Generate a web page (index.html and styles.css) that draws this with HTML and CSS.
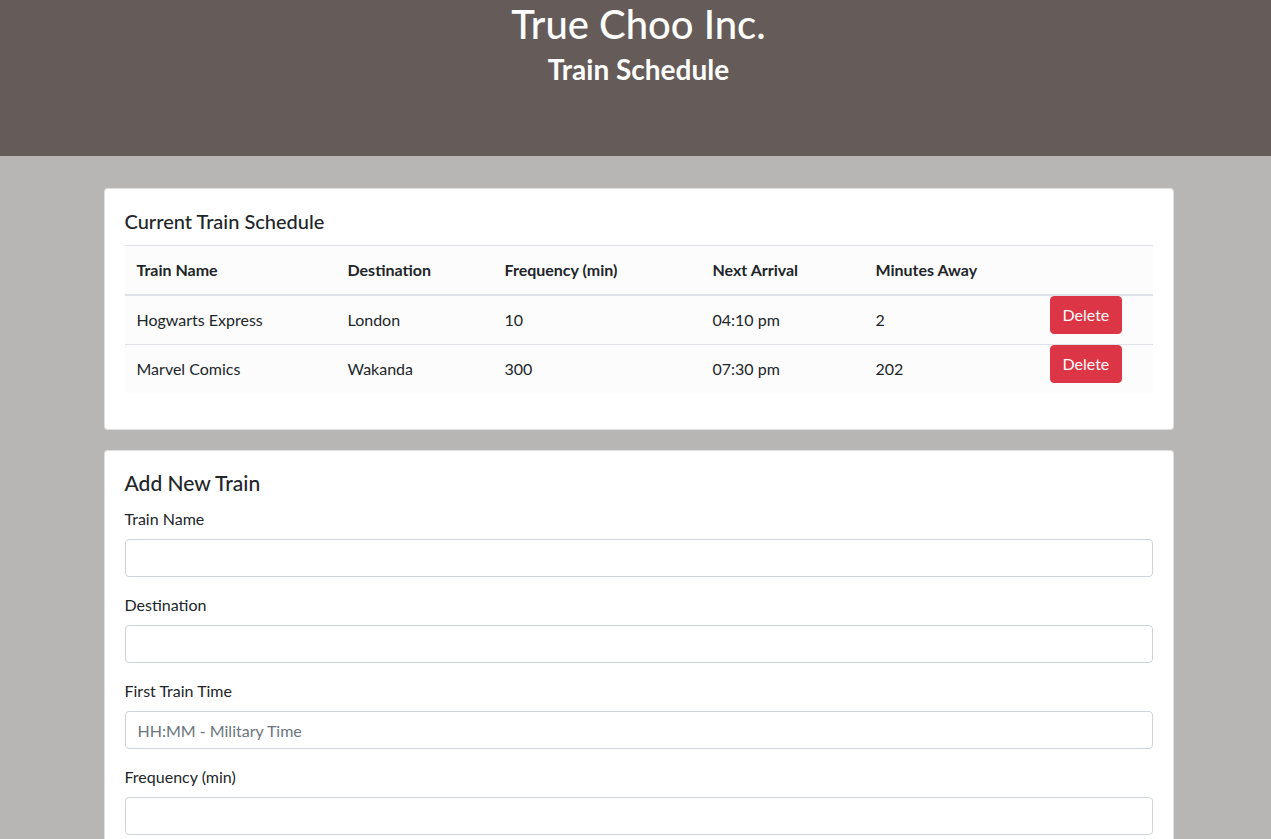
FILE: index.html
```html
<!DOCTYPE html>
<html lang="en">
<head>
<meta charset="utf-8">
<title>Train Schedule</title>
<link rel="stylesheet" href="styles.css">
</head>
<body>
<header class="hero">
  <h1 class="hero-title">True Choo Inc.</h1>
  <h3 class="hero-sub">Train Schedule</h3>
</header>
<main class="container">
  <section class="card">
    <div class="card-body">
      <h5 class="card-title">Current Train Schedule</h5>
      <table class="schedule">
        <thead>
          <tr>
            <th class="c1">Train Name</th>
            <th class="c2">Destination</th>
            <th class="c3">Frequency (min)</th>
            <th class="c4">Next Arrival</th>
            <th class="c5">Minutes Away</th>
            <th class="c6"></th>
          </tr>
        </thead>
        <tbody>
          <tr>
            <td>Hogwarts Express</td>
            <td>London</td>
            <td>10</td>
            <td>04:10 pm</td>
            <td>2</td>
            <td class="action"><button class="btn-delete" type="button">Delete</button></td>
          </tr>
          <tr>
            <td>Marvel Comics</td>
            <td>Wakanda</td>
            <td>300</td>
            <td>07:30 pm</td>
            <td>202</td>
            <td class="action"><button class="btn-delete" type="button">Delete</button></td>
          </tr>
        </tbody>
      </table>
    </div>
  </section>
  <section class="card">
    <div class="card-body">
      <h4 class="card-title form-title">Add New Train</h4>
      <form class="train-form">
        <div class="form-group">
          <label for="name">Train Name</label>
          <input id="name" class="form-control" type="text">
        </div>
        <div class="form-group">
          <label for="dest">Destination</label>
          <input id="dest" class="form-control" type="text">
        </div>
        <div class="form-group">
          <label for="first">First Train Time</label>
          <input id="first" class="form-control" type="text" placeholder="HH:MM - Military Time">
        </div>
        <div class="form-group">
          <label for="freq">Frequency (min)</label>
          <input id="freq" class="form-control" type="text">
        </div>
      </form>
    </div>
  </section>
</main>
</body>
</html>
```
FILE: styles.css
```css
* { box-sizing: border-box; }
html, body { margin: 0; padding: 0; }
body {
  background: #b8b6b4;
  font-family: Lato, "Open Sans", sans-serif;
  font-size: 16px;
  line-height: 1.5;
  color: #212529;
}
.hero {
  background: #655b59;
  color: #fff;
  text-align: center;
  height: 156px;
  padding: 0 0 0 6px;
}
.hero-title {
  margin: 0 0 5px;
  font-size: 40px;
  font-weight: 500;
  line-height: 1.2;
}
.hero-sub {
  margin: 0;
  font-size: 28px;
  font-weight: 700;
  line-height: 1.2;
}
.container {
  width: 1070px;
  margin: 32px 0 0 calc(50% - 532px);
  display: flex;
  flex-direction: column;
  gap: 20px;
}
.card {
  background: #fff;
  border: 1px solid rgba(0,0,0,.125);
  border-radius: 4px;
}
.card-body { padding: 20px; }
.card-title {
  margin: 0 0 12px;
  font-size: 20px;
  font-weight: 500;
  line-height: 1.2;
}
.form-title {
  font-size: 21px;
  line-height: 24px;
  margin-bottom: 12px;
}
.schedule {
  width: 100%;
  border-collapse: collapse;
  background: #fcfcfc;
  margin-bottom: 16px;
}
.schedule th, .schedule td {
  text-align: left;
  padding: 12px;
  border-top: 1px solid #dee2e6;
  vertical-align: top;
}
.schedule thead th {
  border-bottom: 2px solid #dee2e6;
  font-weight: 700;
}
.c1 { width: 211px; }
.c2 { width: 157px; }
.c3 { width: 208px; }
.c4 { width: 163px; }
.c5 { width: 174px; }
.schedule td.action { padding: 0 12px; }
.btn-delete {
  font-family: inherit;
  font-size: 16px;
  line-height: 1.5;
  color: #fff;
  background: #dc3545;
  border: 1px solid #dc3545;
  border-radius: 4px;
  padding: 6px 12px;
  cursor: pointer;
}
.form-group { margin-bottom: 16px; }
.form-group label {
  display: block;
  margin-bottom: 8px;
}
.form-control {
  display: block;
  width: 100%;
  height: 38px;
  padding: 6px 12px;
  font-family: inherit;
  font-size: 16px;
  line-height: 1.5;
  color: #495057;
  background: #fff;
  border: 1px solid #ced4da;
  border-radius: 4px;
}
.form-control::placeholder { color: #6c757d; opacity: 1; }
```
